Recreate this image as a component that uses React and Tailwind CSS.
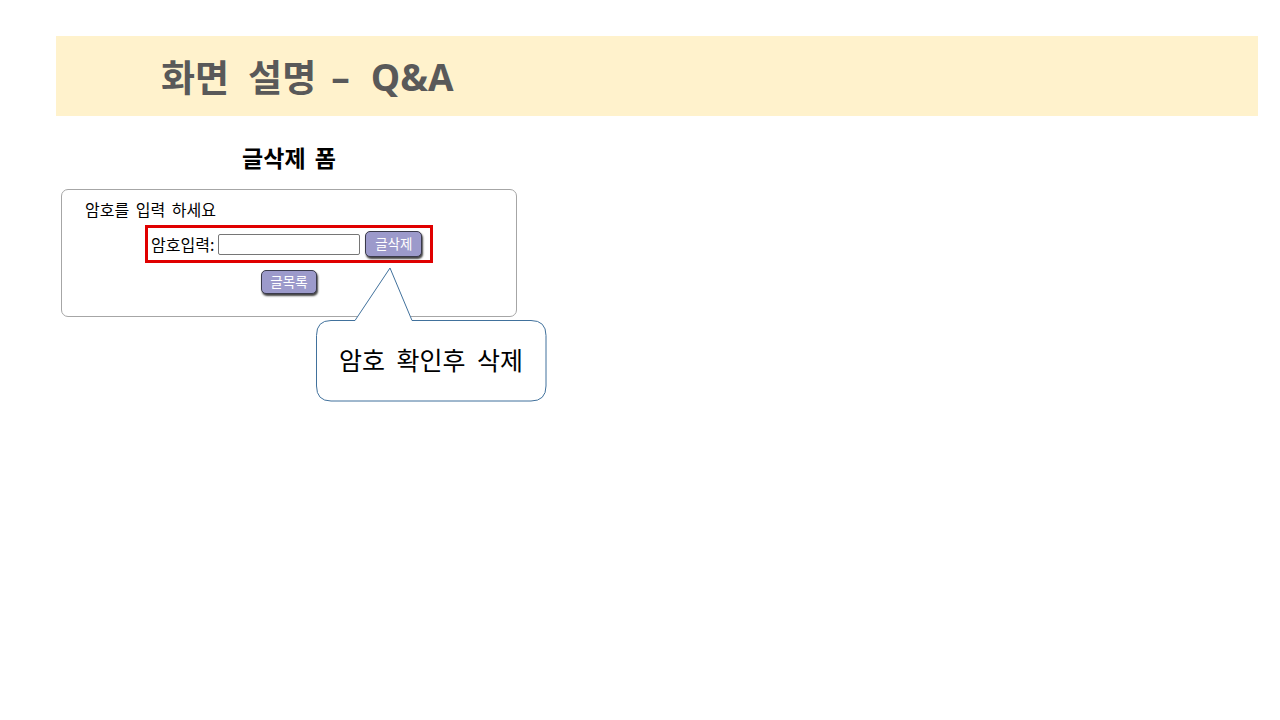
import React from "react";

const font = { fontFamily: '"Noto Sans CJK KR", "Noto Sans", sans-serif' };
const latin = { fontFamily: '"Open Sans", "Noto Sans", sans-serif' };

function Btn({ children, w, h }) {
  return (
    <button
      className={`${w} ${h} flex items-center justify-center rounded-[5px] border border-[#3a3a4a] bg-[#9c9acb] text-[13.5px] leading-none text-white shadow-[1px_2px_2px_#444]`}
    >
      {children}
    </button>
  );
}

export default function App() {
  return (
    <div className="relative h-[720px] w-[1280px] bg-white text-black" style={font}>
      <div className="pt-[36px]">
        <div className="ml-[56px] flex h-[80px] w-[1202px] items-center bg-[#fff2cc] pl-[105px]">
          <h1 className="flex items-center text-[37px] font-bold leading-none text-[#595959]">
            <span>화면</span>
            <span className="ml-[19px]">설명</span>
            <span className="ml-[15px]" style={latin}>–</span>
            <span className="ml-[21px]" style={latin}>Q&amp;A</span>
          </h1>
        </div>
      </div>

      <div className="ml-[61px] w-[456px]">
        <h2 className="mt-[25px] h-[32px] text-center text-[23px] font-bold leading-[32px] [word-spacing:4px]">글삭제 폼</h2>
        <div className="mt-[16px] flex h-[128px] flex-col items-center rounded-[7px] border border-[#a6a6a6]">
          <div className="mt-[9px] w-full pl-[23px] text-[16px] leading-[20px] [word-spacing:3px]">암호를 입력 하세요</div>
          <div className="mt-[6px] flex h-[38px] w-[288px] items-center border-[3px] border-[#e00000] pl-[3px]">
            <span className="text-[16px] leading-none">암호입력:</span>
            <input className="ml-[4px] h-[21px] w-[142px] rounded-[2px] border border-[#767676] bg-white" />
            <div className="ml-[5px]">
              <Btn w="w-[57px]" h="h-[26px]">글삭제</Btn>
            </div>
          </div>
          <div className="mt-[7px]">
            <Btn w="w-[56px]" h="h-[24px]">글목록</Btn>
          </div>
        </div>
      </div>

      <svg className="absolute left-0 top-0" width="1280" height="720" style={{ pointerEvents: "none" }}>
        <path
          d="M331 320.5 L355 320.5 L390 268 L412 320.5 L531 320.5 Q546 320.5 546 335.5 L546 386 Q546 401 531 401 L331 401 Q316.5 401 316.5 386 L316.5 335.5 Q316.5 320.5 331 320.5 Z"
          fill="white"
          stroke="#41719c"
          strokeWidth="1"
        />
      </svg>
      <div className="absolute left-[316px] top-[319px] flex h-[81px] w-[230px] items-center justify-center text-[25px] leading-none [word-spacing:6px]">
        암호 확인후 삭제
      </div>
    </div>
  );
}
